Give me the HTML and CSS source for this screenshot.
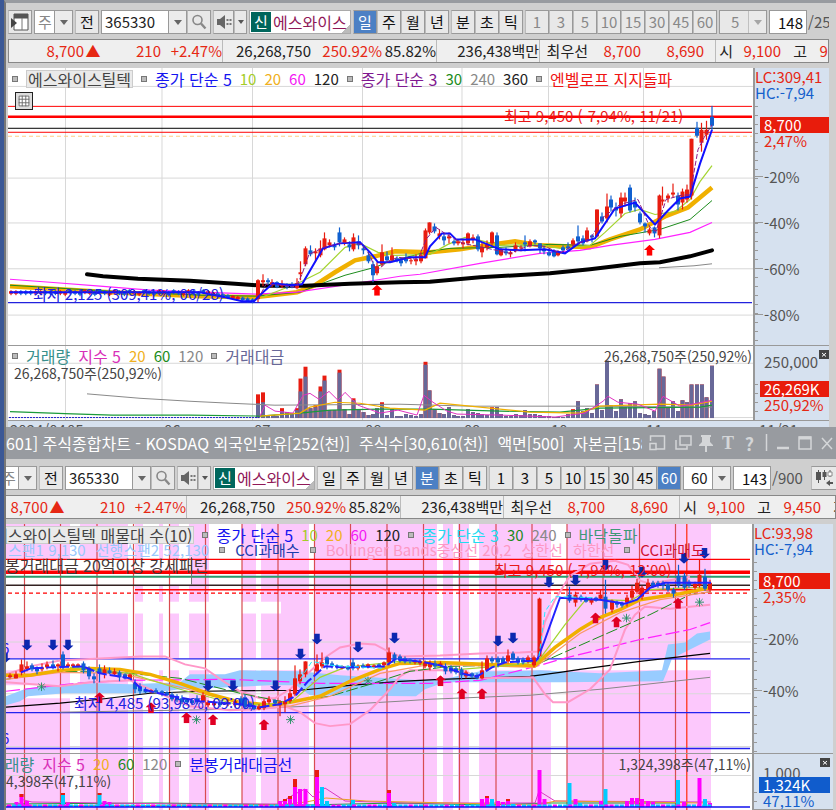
FILE: index.html
```
<!DOCTYPE html>
<html lang="ko">
<head>
  <meta charset="UTF-8" />
  <meta name="viewport" content="width=device-width, initial-scale=1.0" />
  <title>주식종합차트</title>
  <link rel="stylesheet" href="styles.css">
</head>
<body>

<!-- Shared icons -->
<svg class="sprite" aria-hidden="true">
  <symbol id="i-panel" viewBox="0 0 18 18"><path d="M3 1h14v16H3V1zm0 4h14" fill="#fff" stroke="#555"/><path d="M3 1h14v4H3z" fill="#555"/><path d="M11 5v12" stroke="#777"/><path d="M0 5v10l6-5z" fill="#444"/></symbol>
  <symbol id="i-search" viewBox="0 0 18 18"><circle cx="7.5" cy="7" r="4.5" fill="none" stroke="#888" stroke-width="1.6"/><path d="M11 10.5l4.5 5" stroke="#888" stroke-width="2.4"/></symbol>
  <symbol id="i-sound" viewBox="0 0 18 18"><path d="M2 6h3l5-4v14l-5-4H2z" fill="#666"/><path d="M11.5 6h2v2h-2zm3 0h2v2h-2zm-3 4h2v2h-2zm3 0h2v2h-2z" fill="#777"/></symbol>
  <symbol id="i-candles" viewBox="0 0 18 18"><path d="M3.500 1v13M9.500 1v10M15 1v7" stroke="#555"/><path d="M1 3h5v8H1zM7.500 3h4v5h-4z" fill="#555"/><path d="M13 3h4v4h-4z" fill="#fff" stroke="#888"/><path d="M11 14l4-3v2h3v2h-3v2z" fill="#555"/></symbol>
  <symbol id="i-close" viewBox="0 0 10 9"><path d="M0 0h10v9H0z" fill="#444"/><path d="M3 3l4 3.500M7 3L3 6.500" stroke="#fff"/></symbol>
  <symbol id="a-up" viewBox="0 0 12 12"><path d="M6 0l6 5.500H9V12H3V5.500H0z"/></symbol>
  <symbol id="a-down" viewBox="0 0 12 12"><path d="M6 12l6-5.500H9V0H3v6.500H0z"/></symbol>
  <symbol id="a-star" viewBox="0 0 10 10"><path d="M5 0v10M0 5h10M1.500 1.500l7 7M8.500 1.500l-7 7" stroke="#209060" fill="none"/></symbol>
</svg>

<section class="window window--daily">
  <div class="toolbar">
    <button class="btn" aria-label="패널"><svg class="icon"><use href="#i-panel"/></svg></button>
    <span class="combo"><select class="combo--kind is-off" aria-label="구분"><option>주</option></select></span>
    <button class="btn">전</button>
    <div class="group">
      <span class="combo"><input class="combo--code" aria-label="종목코드" value="365330"></span>
      <button class="btn" aria-label="검색"><svg class="icon"><use href="#i-search"/></svg></button>
    </div>
    <div class="group">
      <button class="btn btn--narrow" aria-label="소리"><svg class="icon"><use href="#i-sound"/></svg></button>
      <button class="btn btn--caret" aria-label="소리 목록"></button>
    </div>
    <div class="stock"><b class="stock--mark">신</b><span class="stock--name">에스와이스</span></div>
    <div class="group">
      <button class="btn is-active">일</button><button class="btn">주</button><button class="btn">월</button><button class="btn">년</button>
    </div>
    <div class="group">
      <button class="btn">분</button><button class="btn">초</button><button class="btn">틱</button>
    </div>
    <div class="group is-off">
      <button class="btn">1</button><button class="btn">3</button><button class="btn">5</button><button class="btn">10</button><button class="btn">15</button><button class="btn">30</button><button class="btn">45</button><button class="btn">60</button>
    </div>
    <span class="combo is-off"><select class="combo--minute is-off" aria-label="분"><option>5</option></select></span>
    <label class="count"><input class="count--input" aria-label="봉 개수" value="148">/25</label>
  </div>

  <div class="quote">
    <span class="up">8,700</span><span class="up mid">▲</span><span class="up">210</span><span class="up cell--line">+2.47%</span>
    <span>26,268,750</span><span class="up">250.92%</span><span class="cell--line">85.82%</span>
    <span class="cell--line">236,438백만</span><span>최우선</span><span class="up">8,700</span><span class="up">8,690</span><span class="cell--line"></span>
    <span>시</span><span class="up">9,100</span><span>고</span><span class="up">9,450</span><span>저</span>
  </div>

  <div class="chart chart--daily">
    <div class="plot">
      <div class="legend">
        <i></i><span class="legend--name">에스와이스틸텍</span><i></i>
        <span class="title blue">종가 단순 5</span><span class="lime">10</span><span class="gold">20</span><span class="pink">60</span><span>120</span><i></i>
        <span class="title purple">종가 단순 3</span><span class="green">30</span><span class="gray">240</span><span>360</span><i></i>
        <span class="title red">엔벨로프 지지돌파</span>
      </div>
      <button class="grid-btn" aria-label="표"><svg viewBox="0 0 18 18"><path d="M3.500 3.500h11v11h-11zM7 3v12M11 3v12M3 7h12M3 11h12" fill="#fff" stroke="#666"/></svg></button>
      <span class="note note--high">최고 9,450 (-7,94%, 11/21)</span>
      <span class="note note--low">최저 2,125 (309,41%, 06/28)</span>
      <svg viewBox="8 68 745 278" preserveAspectRatio="none" id="daily">
        <path class="gridline" d="M65.500 68v278M162 68v278M252.500 68v278M362.500 68v278M462 68v278M548.500 68v278M643.500 68v278M8 86.500h745M8 178.500h745M8 223.500h745M8 269.500h745M8 316h745"/>
        <path stroke="#f00" d="M8 106.500h744M8 132.500h744"/>
        <path stroke="#f00" stroke-width="2.500" d="M8 117h744"/>
        <path stroke="#000" d="M8 128.500h744"/>
        <path stroke="#fc8" stroke-dasharray="4 3" d="M8 136.500h744"/>
        <path stroke="#22d" stroke-width="1.400" d="M8 303.500h744"/>
        <path stroke="#f0b000" stroke-width="4.500" d="M10 287l50 3 50 3 90 4 55 1 42-5 18-7 20-13 20-12 20-4 20-5 35 1 30-3 25-4 30-4 25 4 50 2 20-8 30-10 25-13 23-9 24-20"/>
        <path stroke="#1c8c1c" d="M10 286l50 3 50 3 90 4 56 1 44-4 20-8 25-9 30-8 15-6 40-10 20-3 50-1 50-3 40 1 30-9 40-7 30-10 22-19"/>
        <path stroke="#f2f" stroke-width="1.200" d="M10 280l40 3 50 4 50 4 50 2 56 2 41-2 53-8 50-8 20-2 60-11 60-10 40-3 30-5 45-6 35-7 22-10"/>
        <polyline stroke="#a4d430" stroke-width="1.200" points="262,298 280,291 300,283 320,273 345,248 360,244 378,253 395,256 430,255 448,245 465,238 480,241 500,246 540,245 560,249 590,246 605,233 625,214 640,210 655,215 675,212 690,200 700,182 712,166"/>
        <path stroke="#000" stroke-width="4" stroke-linecap="round" d="M87 275l16 2 35 2.500 52 2 45 3 28 2 42 0 45-2 50-1.500 30-.5 50-4.500 70-4 40-4 50-6 20-1 30-6 22-6"/>
        <path stroke="#888" d="M659 268.500l35-2 18-2"/>
        <g class="candles"></g>
        <polyline stroke="#11f" stroke-width="2" points="10,293 60,293 200,293 225,298 242,302 254,302 263,293 273,284 290,286 302,285 323,249 340,244 360,243 370,253 378,263 390,263 410,258 425,258 430,247 442,234 450,234 456,240 475,240 500,250 520,251 545,250 565,254 580,243 595,239 615,209 635,203 645,214 655,225 668,211 680,199 690,197 700,164 712,130"/>
        <polyline stroke="#8a1a8a" stroke-dasharray="5 2" points="258,300 266,285 281,286 296,288 302,275 309,255 324,248 344,243 362,245 370,256 376,272 388,262 398,258 418,260 426,240 436,228 448,236 463,244 483,248 510,254 530,246 545,247 560,254 575,245 590,240 603,218 620,205 638,200 650,228 656,232 666,200 680,196 690,195 698,150 704,138 712,125"/>
        <g fill="#f00"><use href="#a-up" x="371" y="285.500" width="12" height="11"/><use href="#a-up" x="643.500" y="245.500" width="12" height="11"/></g>
      </svg>
    </div>
    <div class="axis">
      <p class="up">LC:309,41</p><p class="down">HC:-7,94</p>
      <p class="tag">8,700</p><p class="axis--sub up">2,47%</p>
      <ul class="axis--scale"><li>-20%</li><li>-40%</li><li>-60%</li><li>-80%</li></ul>
    </div>

    <div class="plot plot--volume">
      <div class="legend">
        <i></i><span class="title teal">거래량</span><span class="title rose">지수 5</span><span class="gold">20</span><span class="green">60</span><span class="gray">120</span><i></i><span class="title slate">거래대금</span>
      </div>
      <span class="note note--left">26,268,750주(250,92%)</span>
      <span class="note note--right">26,268,750주(250,92%)</span>
      <svg viewBox="8 346 745 75" preserveAspectRatio="none" id="dailyVolume">
        <path class="gridline" d="M65.500 346v75M162 346v75M252.500 346v75M362.500 346v75M462 346v75M548.500 346v75M643.500 346v75M8 363.500h745M8 418.500h745"/>
        <g class="bars"></g>
        <path stroke="#888" d="M87 394.500l53 4.500 50 3 40 2 45 2 125-1 70 2h120l122 1"/>
        <path stroke="#1a9a3a" stroke-width="1.200" d="M10 412.500l55 2 47 1.500h78l70 1 40-3 30-3 50-1h50l70 2 60 1 40-4 100-1 12-2"/>
        <path stroke="#f0b000" stroke-width="1.200" d="M260 417l40-3 10-6 25-5 25 1 30 5 35 2 15-7 30 3 60 6 50 1 20-7 60-2 32 1 20-4"/>
        <polyline stroke="#e030c0" points="260,417 265,406 275,412 293,414 303,396 310,394 319,400 329,392 338,401 345,393 358,406 380,414 398,411 417,416 424,396 433,403 447,412 457,415 500,416 555,418 585,414 603,402 608,397 618,403 638,405 655,412 663,397 680,407 692,405 712,401"/>
        <path stroke="#22c" stroke-dasharray="2 1" d="M9 418.500h250"/>
      </svg>
    </div>
    <div class="axis axis--volume">
      <svg class="axis--close"><use href="#i-close"/></svg>
      <p class="axis--label">250,000</p><p class="tag">26,269K</p><p class="axis--sub up">250,92%</p>
    </div>
  </div>
  <div class="dates"><span>2024/04</span><span>05</span><span>06</span><span>07</span><span>08</span><span>09</span><span>10</span><span>11</span><span>11/21</span></div>
</section>

<section class="window window--minute">
  <header class="titlebar">
    <h1>601] 주식종합차트 - KOSDAQ 외국인보유[252(천)]&nbsp; 주식수[30,610(천)]&nbsp; 액면[500]&nbsp; 자본금[158</h1>
    <svg viewBox="0 0 190 20" aria-hidden="true">
      <g fill="none" stroke="#d4d6d8" stroke-width="1.500">
        <path d="M4.500 8V3h14v13h-8M4 10.500h6v6H4z"/><path d="M34 3h11v9H34zM30 7v9h11v-3"/>
        <path d="M153 4h12v12h-12z"/><path d="M153 5h12" stroke-width="3"/><path d="M176 5l10 11m0-11l-10 11"/><path d="M120.500 1v17"/><path d="M131 15h12" stroke-width="2.500"/>
      </g>
      <path d="M55 2h10v2h-1v5l3 3v1H53v-1l3-3V4h-1zM59 13h2v6h-2z" fill="#d4d6d8"/>
    </svg>
    <span class="titlebar--text">T</span><span class="titlebar--help">?</span>
  </header>

  <div class="shifted">
    <div class="toolbar">
      <button class="btn" aria-label="패널"><svg class="icon"><use href="#i-panel"/></svg></button>
      <span class="combo"><select class="combo--kind is-off" aria-label="구분"><option>주</option></select></span>
      <button class="btn">전</button>
      <div class="group">
        <span class="combo"><input class="combo--code" aria-label="종목코드" value="365330"></span>
        <button class="btn" aria-label="검색"><svg class="icon"><use href="#i-search"/></svg></button>
      </div>
      <div class="group">
        <button class="btn btn--narrow" aria-label="소리"><svg class="icon"><use href="#i-sound"/></svg></button>
        <button class="btn btn--caret" aria-label="소리 목록"></button>
      </div>
      <div class="stock"><b class="stock--mark">신</b><span class="stock--name">에스와이스</span></div>
      <div class="group">
        <button class="btn">일</button><button class="btn">주</button><button class="btn">월</button><button class="btn">년</button>
      </div>
      <div class="group">
        <button class="btn is-active">분</button><button class="btn">초</button><button class="btn">틱</button>
      </div>
      <div class="group">
        <button class="btn">1</button><button class="btn">3</button><button class="btn">5</button><button class="btn">10</button><button class="btn">15</button><button class="btn">30</button><button class="btn">45</button><button class="btn is-active">60</button>
      </div>
      <span class="combo"><select class="combo--minute" aria-label="분"><option>60</option></select></span>
      <label class="count"><input class="count--input" aria-label="봉 개수" value="143">/900</label>
      <button class="btn btn--last" aria-label="차트 종류"><svg class="icon"><use href="#i-candles"/></svg></button>
    </div>

    <div class="quote">
      <span class="up">8,700</span><span class="up mid">▲</span><span class="up">210</span><span class="up cell--line">+2.47%</span>
      <span>26,268,750</span><span class="up">250.92%</span><span class="cell--line">85.82%</span>
      <span class="cell--line">236,438백만</span><span>최우선</span><span class="up">8,700</span><span class="up">8,690</span><span class="cell--line"></span>
      <span>시</span><span class="up">9,100</span><span>고</span><span class="up">9,450</span><span>저</span>
    </div>
  </div>

  <div class="chart chart--minute">
    <div class="plot">
      <div class="legend legend--cut">
        <span class="legend--name">에스와이스틸텍 매물대 수(10)</span><i></i>
        <span class="title blue">종가 단순 5</span><span class="lime">10</span><span class="gold">20</span><span class="pink">60</span><span>120</span><i></i>
        <span class="title cyan">종가 단순 3</span><span class="green">30</span><span class="gray">240</span><i></i>
        <span class="title sea">바닥돌파</span>
      </div>
      <div class="legend legend--second">
        <span class="sky">스팬1 9,130</span><span class="sky">선행스팬2 52,130</span><i></i>
        <span class="navy">CCI과매수</span><i></i>
        <span class="salmon">Bollinger Bands중심선 20,2</span><span class="salmon">상한선</span><span class="salmon">하한선</span><i></i>
        <span class="crimson">CCI과매도</span>
      </div>
      <div class="pattern">봉거래대금 20억이상 강세패턴</div>
      <span class="note note--high">최고 9,450 (-7,94%, 12:00)</span>
      <span class="note note--low">최저 4,485 (93,98%, 09:00)</span>
      <svg viewBox="6 524 746 230" preserveAspectRatio="none" id="minute">
        <g class="zones"></g>
        <path fill="#fff" d="M6 559h186v26H6zM6 585h129v17H6zM6 602h275v12H6zM6 659h705v12H6zM6 686h174v13H6z"/>
        <path class="gridline" d="M6 642.500h745M6 694.500h745M6 747.500h745"/>
        <path fill="#98ccff" d="M6 697l21-8 68-5 35 1 50-2 10-8h35l15-4 60 1 40 4 80 5 25-1.500 35-7.500h20l40-1 60 3 62-3 6-26 17-2 12-9 13-2v8l-38 19-4 11-5 12-103 1H445l-20 7-9 7-106-1-14-10-26 0-40 2-50 2-30 4H65l-37 3-8 5-14 4z"/>
        <g class="days"></g>
        <path stroke="#f00" stroke-width="1.400" d="M6 559.500h744M135 590h615"/>
        <path stroke="#f00" stroke-width="3.500" d="M6 572.500h744"/>
        <path stroke="#2a9a6a" stroke-width="2" d="M6 577h744"/>
        <path stroke="#322" stroke-width="1.500" d="M6 585.500h744"/>
        <path stroke="#f00" stroke-width="1.200" stroke-dasharray="4 3" d="M8 593.500h742"/>
        <path stroke="#22e" stroke-width="1.400" d="M6 659.500h744M6 713.500h744M6 749.500h744"/>
        <path stroke="#888" d="M60 713l180-3 90-4 70-4 30-2 100-4 70-6 110-12"/>
        <path stroke="#000" stroke-width="1.200" d="M6 708l54-4 40-4 50-6 50-2 100-1 50-5 50-4 40-2 90-3 30-4 20-3 60-8 70-8"/>
        <path stroke="#f2f" stroke-width="1.200" stroke-dasharray="14 4" d="M6 692l70-8 54-3 100-1 90 4 110 0 50-3 60-15 20-6 40-10 40-10 50-10 20-7"/>
        <polyline stroke="#ff98c8" stroke-width="2" points="6,675 30,667 60,661 100,659 140,657 165,657 185,665 205,669 225,683 240,692 260,699 275,699 290,690 308,674 325,658 340,648 360,644 375,645 388,652 400,657 440,656 480,654 520,653 538,652 545,622 555,600 570,576 590,564 615,561 628,565 640,581 650,584 690,577"/>
        <polyline stroke="#ff98c8" stroke-width="2" points="6,683 60,687 90,683 130,681 150,690 190,707 230,711 260,710 285,707 300,713 315,724 330,727 350,725 370,711 390,690 400,677 410,671 440,671 465,672 480,679 533,678 545,695 553,703 568,703 590,690 610,670 625,630 635,615 645,607 670,609 710,605"/>
        <polyline stroke="#1c8c1c" stroke-dasharray="12 3" points="6,680 60,672 120,673 180,679 240,694 285,703 330,697 370,685 410,672 450,667 537,665 600,637 650,615 690,595 711,592"/>
        <polyline stroke="#fa9868" stroke-width="1.200" points="6,680 60,673 120,674 180,688 240,704 290,707 330,697 380,674 430,665 535,668 580,634 620,613 660,600 711,592"/>
        <path stroke="#f0b000" stroke-width="3.500" d="M6 676h24l30-5 30-2 30 1 30 5 30 9 30 11 30 8 30 3 20-3 30-6 30-15 30-12 20-6 40-1 50 2 45 1 20-18 25-18 20-12 20-8 20-10 40-6 30-6"/>
        <polyline stroke="#a4d430" stroke-width="1.200" points="70,668 130,674 180,690 240,706 290,704 320,678 345,668 400,662 460,670 510,666 538,662 565,625 585,601 600,600 630,601 650,590 711,587"/>
        <g class="candles"></g>
        <polyline stroke="#22f" stroke-width="2" stroke-dasharray="10 3" points="21,673 31,669 50,668 83,667 100,674 130,679 142,690 172,697 200,702 240,705 260,708 280,705 295,697 308,682 325,667 345,668 385,667 395,660 420,662 440,666 465,675 477,677 492,668 505,663 537,661"/>
        <polyline stroke="#22f" stroke-width="2" points="537,661 545,640 560,598 600,600 625,604 637,600 650,588 665,583 711,583"/>
        <path stroke="#2ef" stroke-dasharray="5 3" d="M300 680l12-18 20 4 50 3M539 657l6-45 10-15 40 1"/>
        <g class="marks"></g>
      </svg>
      <span class="edge edge--top">6</span><span class="edge edge--bottom">6</span>
    </div>
    <div class="axis">
      <p class="up">LC:93,98</p><p class="down">HC:-7,94</p>
      <p class="tag">8,700</p><p class="axis--sub up">2,35%</p>
      <ul class="axis--scale"><li>-20%</li><li>-40%</li></ul>
    </div>

    <div class="plot plot--volume">
      <div class="legend legend--cut2">
        <span class="title teal">거래량</span><span class="title rose">지수 5</span><span class="gold">20</span><span class="green">60</span><span class="gray">120</span><i></i><span class="title blue">분봉거래대금선</span>
      </div>
      <span class="note note--left">4,398주(47,11%)</span>
      <span class="note note--right">1,324,398주(47,11%)</span>
      <svg viewBox="6 754 746 56" preserveAspectRatio="none" id="minuteVolume">
        <g class="zones"></g>
        <path class="gridline" d="M6 775.500h745"/>
        <g class="days"></g>
        <path stroke="#1a9a3a" stroke-width="1.200" d="M6 804l150-1 150 2 90-2 90 2 60-2h130"/>
        <polyline stroke="#d83ac0" points="20,799 32,802 180,804 278,804 293,795 305,789 313,797 325,788 345,801 405,803 535,803 539,791 555,801 711,802"/>
        <path stroke="#e8a020" d="M6 806l270-1 30-3 20-4 40 3 170 4 20-4 150 2"/>
        <g class="bars"></g>
        <path stroke="#11e" stroke-width="1.500" d="M6 807h744"/>
      </svg>
    </div>
    <div class="axis axis--volume">
      <svg class="axis--close"><use href="#i-close"/></svg>
      <p class="axis--label">1,000</p><p class="tag tag--down">1,324K</p><p class="axis--sub down">47,11%</p>
    </div>
  </div>
</section>

<script>
  const RED = '#e81c10', BLUE = '#1060d0';

  // x, high, body top, body bottom, low, rising
  const dailyCandles = [
    [258,280,281,300,303,1],[263,275,281,283,287,1],[268,279,281,283,286,0],[272,280,283,286,288,1],[277,282,283,288,289,0],
    [282,281,285,287,289,1],[287,284,286,288,290,0],[292,283,286,288,289,0],[297,279,284,289,290,1],[300.5,262,273,275,281,1],
    [305.5,247,249,265,267,1],[310.5,246,251,255,257,0],[315.5,249,252,254,263,1],[320.5,241,249,256,258,1],[324.5,233,239,250,251,1],
    [329.5,240,243,246,248,1],[334.5,243,246,248,251,0],[339.5,228,233,243,247,0],[344.5,238,240,244,246,1],[349.5,242,245,248,252,0],
    [353.5,234,238,250,252,1],[358.5,236,242,246,250,0],[363.5,246,249,251,255,0],[368.5,252,256,262,264,0],[373,262,265,276,283,0],
    [377,263,267,274,276,1],[382,245,253,265,267,1],[387,252,257,261,263,0],[392,248,256,261,263,1],[397,257,259,261,263,0],
    [401,259,261,264,267,0],[406,254,259,262,264,0],[411,259,261,262,265,1],[416,255,260,262,266,1],[421,252,256,262,264,1],
    [425.5,229,231,259,259,1],[429.5,223,223,233,235,1],[434.5,224,227,232,234,0],[439.5,230,234,237,240,1],[444,234,237,241,246,0],
    [449,233,237,239,244,1],[454,240,242,244,246,0],[458,240,242,244,246,1],[463,240,243,245,249,1],[468,233,234,244,246,1],
    [473,235,238,240,244,1],[478,235,237,250,252,0],[482,243,248,253,258,1],[487,241,245,248,251,1],[492,232,233,244,246,1],
    [497,233,236,255,256,0],[501,249,250,256,257,1],[506,248,252,254,256,0],[510.5,250,253,255,258,1],[515.5,243,246,251,253,1],
    [521,246,248,249,252,1],[525,236,243,245,252,0],[530,240,242,247,248,1],[535,240,241,243,245,0],[540,244,244,249,254,0],
    [544,247,250,252,255,0],[549,250,253,256,257,0],[554,250,252,257,258,0],[558,251,252,256,257,1],[563,246,248,251,254,0],
    [568,243,247,249,252,0],[573,239,241,245,247,1],[578,226,237,242,244,0],[583,236,239,244,246,0],[587,228,231,242,243,1],
    [592,235,236,238,243,0],[597,210,210,237,238,1],[602,213,217,222,224,0],[607,194,207,219,223,1],[611,196,200,208,212,0],
    [616,203,208,211,217,0],[621,193,198,214,218,1],[625,193,198,202,207,1],[630,185,188,211,213,0],[635,198,202,208,212,0],
    [640,212,214,223,225,0],[645,223,224,227,233,0],[649.5,228,230,234,236,1],[654.5,227,228,234,238,0],[659.5,195,196,236,239,1],
    [662.5,187,200,202,206,1],[668,194,196,199,203,1],[673,184,193,195,198,1],[678,193,196,205,211,0],[682.5,189,192,203,210,1],
    [687,185,190,200,203,1],[691.5,139,139,196,200,1],[697,122,128,136,138,0],[701.5,123,130,143,152,1],[706.5,121,130,135,140,1],
    [712,106,117,126,130,0]
  ];
  // quiet months before the first move
  for (let i = 0; i < 50; i++) {
    const x = 11 + i * 4.93;
    const y = x < 60 ? 293 : x < 210 ? 292 + (i * 7 % 3) : 294 + (x - 210) / 6;
    dailyCandles.push([x, y - 2, y - 1, y + 1.5, y + 3, i % 5 < 2 ? 1 : 0]);
  }

  const minuteCandles = [
    [10,674,676,678,679,1],[16,672,675,679,679,1],[21.5,660,665,673,676,1],[27,662,667,670,672,1],[32,664,666,670,672,0],
    [37,667,668,672,675,0],[42,664,668,670,672,1],[47,662,665,668,670,1],[53,661,665,668,670,0],[58,664,665,667,672,1],
    [63,652,655,668,670,0],[68,663,665,667,668,1],[73,664,665,667,668,1],[78,664,665,667,668,1],[83.5,662,664,671,674,0],
    [89,667,669,677,680,0],[94,674,677,680,684,0],[99.5,665,669,674,683,0],[104.5,666,670,674,679,1],[109.5,668,671,674,675,0],
    [114.5,669,672,675,676,1],[119.5,671,673,678,682,0],[125,674,675,679,680,0],[130,674,675,680,680,1],[135,680,684,690,694,0],
    [140,684,687,692,695,0],[145.5,688,690,693,694,0],[151,690,691,693,694,1],[156,689,691,693,694,0],[162,691,692,694,697,0],
    [167,692,693,696,697,0],[172,693,695,700,702,0],[177,695,697,701,703,0],[182,696,699,703,705,0],[187,699,700,703,705,0],
    [192,699,701,704,706,0],[197,696,699,703,705,0],[203,693,696,702,704,1],[208,701,703,706,708,1],[214,701,703,706,707,1],
    [220,701,703,706,708,0],[228,700,703,705,707,1],[235,700,702,706,708,1],[241,697,699,706,707,0],[245,695,698,708,710,0],
    [250,703,704,708,710,0],[254,706,707,710,711,0],[259,705,707,710,711,1],[264,700,702,709,711,1],[269,697,700,703,705,1],
    [275,700,701,704,705,0],[280,701,703,706,717,1],[285,697,702,705,713,1],[290,690,694,702,704,1],[295,666,679,695,697,1],
    [300,670,675,682,685,1],[305.5,662,662,675,678,1],[317,655,665,672,674,1],[322,653,663,667,669,1],[327,657,658,665,670,0],
    [332,662,664,667,669,0],[337,665,666,668,670,0],[342,666,667,669,670,1],[348,666,668,670,671,0],[353,659,663,669,671,0],
    [358,665,667,669,671,1],[363,664,666,668,669,0],[368,664,665,667,669,1],[374,665,666,668,669,1],[379,664,665,667,668,0],
    [384,662,663,666,667,1],[389,648,653,663,666,1],[394.5,653,655,661,664,0],[400,655,657,661,663,0],[405,657,659,662,664,0],
    [410,659,660,662,664,0],[415,660,661,663,665,1],[420,660,662,664,666,1],[425,661,663,667,669,1],[430,661,664,668,671,1],
    [435,661,664,667,669,0],[440.5,662,664,666,668,1],[445.5,664,667,672,675,0],[451,666,668,672,674,0],[456,667,669,673,675,0],
    [461.5,668,670,676,680,0],[466,671,673,677,679,1],[472,673,674,677,679,0],[477,674,676,679,680,0],[482,662,671,679,680,1],
    [487,656,659,671,672,1],[492,657,659,662,664,0],[498,657,659,663,668,0],[503,657,659,664,665,0],[508,650,656,662,664,1],
    [513,652,654,660,661,0],[518,657,659,663,665,0],[523,658,660,663,665,0],[528,656,658,662,664,1],[534,656,658,666,668,1],
    [539.5,598,599,657,658,1],[569.5,587,595,601,603,0],[575.5,592,595,603,607,1],[581,595,597,600,602,0],[586,597,598,602,603,0],
    [591.5,598,600,603,605,1],[596,597,598,601,602,0],[600.5,590,595,599,600,1],[605.5,580,597,609,614,0],[612,600,601,610,613,1],
    [617,601,603,605,608,0],[622,602,604,606,608,0],[627,595,598,603,607,1],[632,586,591,598,600,1],[637,579,583,592,594,1],
    [642,586,588,597,600,1],[648,579,583,590,592,1],[653,581,583,587,588,0],[658,581,583,585,588,0],[663,581,583,586,590,0],
    [668,583,585,590,592,0],[673.5,588,590,594,598,0],[678.5,565,576,586,588,0],[684.5,573,576,588,590,0],[689,580,582,586,588,0],
    [695,582,584,588,590,1],[699.5,560,575,586,588,1],[705,569,577,589,591,0],[710,580,583,590,592,1]
  ];

  // x, top, top of the value bar
  const dailyBars = [
    [258,395,404],[263,393,403],[268,416],[273,416],[277,417],[282,409,412],[287,413],[292,414],[297,409,411],[300.5,379,392],
    [305.5,367,377],[310.5,409],[315.5,406,408],[320.5,387,392],[324.5,376,381],[329.5,411],[334.5,411],[339.5,370,373],[344.5,410],
    [349.5,415],[353.5,399,401],[358.5,410],[363.5,413],[368.5,416],[373,415],[377,409],[382,403,405],[387,416],[392,410],[397,417],
    [401,417],[406,415],[411,416],[416,417],[421,415],[425.5,362,365],[429.5,391],[434.5,410],[439.5,414],[444,415],[449,408],
    [454,416],[458,417],[463,417],[468,410],[473,413],[478,414],[482,415],[487,416],[492,408,410],[497,408],[501,415],[506,417],
    [511,417],[516,415],[521,416],[525,411],[530,415],[535,415],[540,416],[544,417],[549,417],[554,418],[558,418],[563,418],
    [568,415],[573,410,412],[578,402],[583,412],[587,409],[592,414],[597,385],[602,411],[607,361],[611,406],[616,412],[621,400],
    [625,408],[630,404],[635,402],[640,414],[645,415],[649,416],[654,412],[659.5,369],[663.5,377],[668,409],[673,402],[678,412],
    [682.5,401],[687,403],[691.5,385],[697,385],[702,385],[706.5,398],[712,366]
  ];

  const MAG = '#f0f', CYAN = '#0cf';
  // x, top, colour, height of the red cap
  const minuteBars = [
    [16.5,802,MAG],[21.5,794,MAG,3],[27,801,MAG],[63,793,CYAN,2],[68,803,MAG],[99.5,793,CYAN,2],[104.5,801,MAG],[109.5,802,MAG],
    [280,801,MAG],[285,799,MAG,2],[290,796,MAG,3],[295,779,MAG,8],[300,789,MAG],[305.5,789,MAG],[317,770,MAG,7],[322,787,CYAN],
    [327,801,CYAN],[353,800,CYAN],[389,790,MAG,3],[394,803,CYAN],[482,799,MAG],[487,796,MAG,2],[492,799,CYAN],[498,801,MAG],
    [503,802,MAG],[508,799,MAG,2],[513,804,CYAN],[539.5,770,MAG],[544.5,799,MAG],[569.5,783,CYAN],[575.5,799,MAG],[580,803,CYAN],
    [601,801,MAG],[605.5,789,CYAN],[627,801,MAG],[632,798,MAG],[637,798,MAG],[642,799,MAG],[648,801,MAG],[653,802,MAG],
    [678,780,CYAN],[684,802,MAG],[699.5,778,MAG],[705,799,CYAN],[710,803,MAG]
  ];
  for (let x = 9; x < 710; x += 5.15) {
    minuteBars.push([x, 804.5, Math.round(x) % 3 ? CYAN : MAG]);
  }

  const zones = [[6,70],[80,128],[135,143],[159,163],[169,179],[189,209],[242,256],[261,309],[315,437],[443,453],[458,469],[479,551],[567,711]];
  const days = [24.5,60.5,97,133.5,169.5,205.5,242,278,314.5,350.5,387,423.5,459.5,496,532,567,603,639.5,675.5];

  const rect = (x, y, w, h, fill) => `<rect x="${x}" y="${y}" width="${w}" height="${h}" fill="${fill}"/>`;

  function fill(selector, items) {
    document.querySelector(selector).innerHTML = items.join('');
  }

  function candle([x, high, top, bottom, low, rising]) {
    const color = rising ? RED : BLUE;
    return rect(x - 0.6, high, 1.2, low - high, color) + rect(x - 2, top, 4, bottom - top, color);
  }

  fill('#daily .candles', dailyCandles.map(candle));
  fill('#minute .candles', minuteCandles.map(candle));
  fill('#dailyVolume .bars', dailyBars.map(([x, top, value]) =>
    rect(x - 2, top, 4, 419 - top, RED) + rect(x - 2, value || top, 4, 419 - (value || top), '#686898')));
  fill('#minuteVolume .bars', minuteBars.map(([x, top, color, cap]) =>
    rect(x - 2, top, 4, 807 - top, color) + rect(x - 2, top, 4, cap || 0, RED)));

  for (const id of ['#minute', '#minuteVolume']) {
    fill(id + ' .zones', zones.map(([a, b]) => rect(a, 524, b - a, 286, '#fcc8fc')));
    fill(id + ' .days', days.map(x => rect(x - 0.6, 524, 1.2, 286, '#d84c50')).concat(rect(686, 524, 1.5, 286, '#ff4838')));
  }

  const mark = (name, color, size) => ([x, y]) =>
    `<use href="#${name}" x="${x - size / 2}" y="${y}" width="${size}" height="${size}" fill="${color}"/>`;

  fill('#minute .marks', [
    ...[[5,653],[27,640],[53,640],[68,640],[208,681],[233,681],[275.5,681],[300.5,649],[317,634],[358,642],[394.5,633],[498,636],
      [513,633],[549,577],[575.5,575],[605.5,560],[642,567],[684,553],[704.5,548]].map(mark('a-down', '#0c28b0', 11)),
    ...[[99.5,693],[151,703],[186.5,713],[213,715],[264,720],[440.5,676],[462,689],[482,689],[595.5,613],[616.5,617],[678,598]].map(mark('a-up', '#e00024', 11)),
    ...[[41.5,683],[196.5,716],[290.5,716],[368,677],[626.5,614],[699.5,598]].map(mark('a-star', 'none', 9))
  ]);
</script>

</body>
</html>
```
FILE: styles.css
```
* {
  box-sizing: border-box;
}

body {
  margin: 0;
  border-left: 4px solid #3b5896;
  background-color: #cfcfcf;
  color: #222;
  font-family: "Noto Sans CJK KR", "Liberation Sans", sans-serif;
  font-size: 15px;
  line-height: 16px;
  overflow: hidden;
}

button, input, select {
  font: inherit;
  color: inherit;
}

p, ul, h1 {
  margin: 0;
  padding: 0;
}

.sprite {
  position: absolute;
  width: 0;
  height: 0;
}

.window {
  border-left: 2px solid #777;
  overflow: hidden;
}

.window--daily {
  border-top: 3px solid #989ba0;
  padding: 0 7px 0 2px;
}

.window--minute {
  padding-right: 3px;
}

.shifted {
  margin: 0 -3px 0 -34px;
}

/* toolbar */
.toolbar {
  display: flex;
  gap: 2px;
  padding: 7px 0 5px;
  overflow: hidden;
}

.toolbar > * {
  flex-shrink: 0;
}

.group {
  display: flex;
}

.btn {
  display: flex;
  align-items: center;
  justify-content: center;
  width: 24px;
  height: 24px;
  padding: 0;
  border: 1px solid #999;
  border-left-color: #bbb;
  background-color: #e8e8e8;
  color: #111;
}

.btn--narrow {
  width: 21px;
}

.btn--last {
  margin-left: 6px;
  width: 26px;
}

.btn.is-active {
  background-color: #4c80c4;
  color: #fff;
}

.is-off, .is-off .btn {
  color: #888;
}

.icon {
  width: 18px;
  height: 18px;
}

.combo {
  position: relative;
  display: flex;
  height: 24px;
  border: 1px solid #999;
  background-color: #fff;
}

.combo::after {
  content: "";
  position: absolute;
  right: 0;
  top: 0;
  width: 17px;
  height: 22px;
  border-left: 1px solid #999;
  background: #ececec url('data:image/svg+xml,<svg xmlns="http://www.w3.org/2000/svg" width="8" height="5"><path d="M0 0h8L4 5z" fill="%23666"/></svg>') center no-repeat;
  pointer-events: none;
}

.combo.is-off::after {
  opacity: 0.5;
}

.combo select, .combo input, .count--input {
  appearance: none;
  border: 0;
  border-radius: 0;
  padding: 0 0 0 3px;
  background-color: #fff;
  outline: none;
}

.combo--kind {
  width: 37px;
}

.combo .combo--minute {
  width: 46px;
  padding-left: 7px;
}

.combo.is-off, .combo .combo--minute.is-off {
  background-color: #e8e8e8;
}

.combo .combo--minute.is-off {
  padding-left: 11px;
}

.combo--code {
  width: 84px;
}

.btn--caret {
  width: 13px;
}

.btn--caret::after {
  content: "";
  border: 3px solid transparent;
  border-top: 4px solid #555;
  border-bottom: 0;
}

.stock {
  display: flex;
  align-items: center;
  width: 102px;
  height: 24px;
  border: 1px solid #aaa;
  background: linear-gradient(135deg, transparent 50%, #bbb 50%) right bottom / 8px 8px no-repeat #fff;
  overflow: hidden;
  white-space: nowrap;
}

.stock--mark {
  width: 20px;
  height: 20px;
  margin: 0 2px 0 1px;
  background-color: #00665c;
  color: #fff;
  font-weight: 400;
  line-height: 20px;
  text-align: center;
}

.stock--name {
  color: #901858;
  font-size: 16px;
}

.count {
  display: flex;
  align-items: center;
  gap: 1px;
  color: #555;
}

.count .count--input {
  width: 38px;
  height: 24px;
  padding: 0 3px 0 0;
  border: 1px solid #999;
  color: #111;
  text-align: right;
}

/* price row */
.quote {
  display: grid;
  grid-template-columns: 75px 18px 59px 62px 88px 71px 55px 103px 48px 53px 63px 12px 17px 48px 26px 50px 26px;
  height: 24px;
  margin-bottom: 5px;
  border: 1px solid #888;
  background-color: #efefef;
  line-height: 22px;
  text-align: right;
  white-space: nowrap;
  overflow: hidden;
}

.mid {
  text-align: center;
}

.cell--line {
  border-right: 1px solid #bbb;
}

.up {
  color: #e62814;
}

.down {
  color: #1460cc;
}

/* charts */
.chart {
  display: grid;
  grid-template-columns: minmax(0, 1fr) 76px;
}

.chart--minute {
  grid-template-columns: minmax(0, 1fr) 81px;
}

.plot {
  position: relative;
  height: 278px;
  border-bottom: 1px solid #999;
  background-color: #fff;
  overflow: hidden;
}

.chart--minute .plot {
  height: 230px;
}

.plot.plot--volume {
  height: 75px;
}

.chart--minute .plot.plot--volume {
  height: 56px;
  border: 0;
}

.plot > svg {
  display: block;
  width: 100%;
  height: 100%;
  fill: none;
}

.gridline {
  stroke: #d8d8d8;
}

.legend {
  position: absolute;
  top: 2px;
  left: 4px;
  display: flex;
  align-items: center;
  gap: 8px;
  white-space: nowrap;
}

.legend i {
  width: 6px;
  height: 6px;
  border: 1px solid #777;
  background-color: #bbb;
}

.title {
  font-size: 16px;
}

.legend--name {
  padding: 0 1px;
  border: 1px solid #ccc;
  background-color: #eaeaea;
  color: #444;
  font-size: 16px;
}

.legend--cut {
  left: -15px;
}

.legend--second {
  top: 18px;
  left: 2px;
  gap: 10px;
}

.legend--cut2 {
  left: -16px;
}

.pattern {
  position: absolute;
  top: 33px;
  left: -1px;
  height: 28px;
  width: 187px;
  border-right: 1px solid #777;
  white-space: nowrap;
  color: #443838;
  font-size: 16px;
}

.note {
  position: absolute;
  white-space: nowrap;
  color: #444;
}

.note--high {
  top: 40px;
  left: 496px;
  color: #e81818;
}

.note--low {
  top: 218px;
  left: 25px;
  color: #2222e0;
}

.chart--minute .note--high {
  top: 38px;
  left: 488px;
}

.chart--minute .note--low {
  top: 171px;
  left: 68px;
}

.note--left, .note--right {
  font-size: 14px;
}

.note--left {
  top: 19px;
  left: 6px;
}

.note--right {
  top: 2px;
  right: 1px;
}

.chart--minute .note--left {
  left: 0;
}

.edge {
  position: absolute;
  left: -5px;
  color: #22e;
}

.edge--top {
  top: 116px;
}

.edge--bottom {
  top: 206px;
}

.grid-btn {
  position: absolute;
  top: 24px;
  left: 7px;
  width: 18px;
  height: 18px;
  padding: 0;
  border: 1px solid #222;
  background-color: #ddd;
}

.grid-btn svg {
  display: block;
  width: 16px;
  height: 16px;
}

.blue { color: #1414f0; }
.lime { color: #a4cc28; }
.gold { color: #f0b020; }
.pink { color: #f418f4; }
.purple { color: #801890; }
.green { color: #1c8c1c; }
.gray { color: #888; }
.red { color: #f01414; }
.teal { color: #38908c; }
.rose { color: #d830b8; }
.slate { color: #686898; }
.cyan { color: #20dcf0; }
.sea { color: #409878; }
.sky { color: #98c8fc; }
.navy { color: #1c3cac; }
.salmon { color: #fc98c4; }
.crimson { color: #d01030; }

/* right hand scale */
.axis {
  position: relative;
  padding: 1px 0 0;
  border-left: 2px solid #999;
  border-bottom: 1px solid #999;
  background-color: #d6e1ef;
  white-space: nowrap;
  overflow: hidden;
}

.axis::before {
  content: "";
  position: absolute;
  top: 38px;
  bottom: 0;
  left: 0;
  width: 3px;
  background: repeating-linear-gradient(#999 0 1px, transparent 1px 9px);
}

.tag {
  margin: 16px 0 0 5px;
  padding-left: 4px;
  background-color: #e81c0c;
  color: #fff;
}

.tag--down {
  background-color: #105ccc;
}

.axis--sub {
  padding-left: 9px;
}

.axis--scale {
  margin-top: 5px;
  list-style: none;
  color: #555;
}

.axis--scale li {
  height: 46px;
  line-height: 46px;
}

.axis--scale li::before {
  content: "";
  display: inline-block;
  width: 8px;
  margin: 0 1px 4px 0;
  border-top: 1px solid #999;
  vertical-align: middle;
}

.chart--minute .axis--scale {
  margin-top: 8px;
}

.chart--minute .axis--scale li {
  height: 52px;
  line-height: 52px;
}

.chart--minute .tag {
  margin-right: 3px;
}

.axis--label {
  margin-top: 7px;
  padding-left: 9px;
  color: #555;
}

.axis--volume .tag {
  margin-top: 11px;
}

.chart--minute .axis--label {
  margin-top: 10px;
}

.chart--minute .axis--volume .tag {
  position: relative;
  margin-top: -4px;
}

.axis--close {
  position: absolute;
  top: 4px;
  right: 0;
  width: 10px;
  height: 9px;
}

.chart--minute .axis--close {
  right: 3px;
}

.dates {
  display: grid;
  grid-template-columns: 57px 97px 90px 111px 99px 87px 95px 113px 1fr;
  height: 6px;
  padding-left: 2px;
  background-color: #d6e1ef;
  color: #555;
  line-height: 18px;
  white-space: nowrap;
  overflow: hidden;
}

/* second window caption */
.titlebar {
  display: flex;
  align-items: center;
  gap: 4px;
  position: relative;
  height: 32px;
  margin-right: -3px;
  background-color: #989ba0;
  color: #fff;
}

.titlebar h1 {
  flex: 1;
  min-width: 0;
  font-size: 16px;
  font-weight: 400;
  line-height: 32px;
  white-space: nowrap;
  overflow: hidden;
}

.titlebar svg {
  flex: none;
  width: 190px;
  height: 20px;
}

.titlebar--text, .titlebar--help {
  position: absolute;
  color: #d4d6d8;
  font-weight: 700;
  font-size: 18px;
}

.titlebar--text {
  right: 102px;
  font-family: "Liberation Serif", serif;
}

.titlebar--help {
  right: 82px;
}
```
